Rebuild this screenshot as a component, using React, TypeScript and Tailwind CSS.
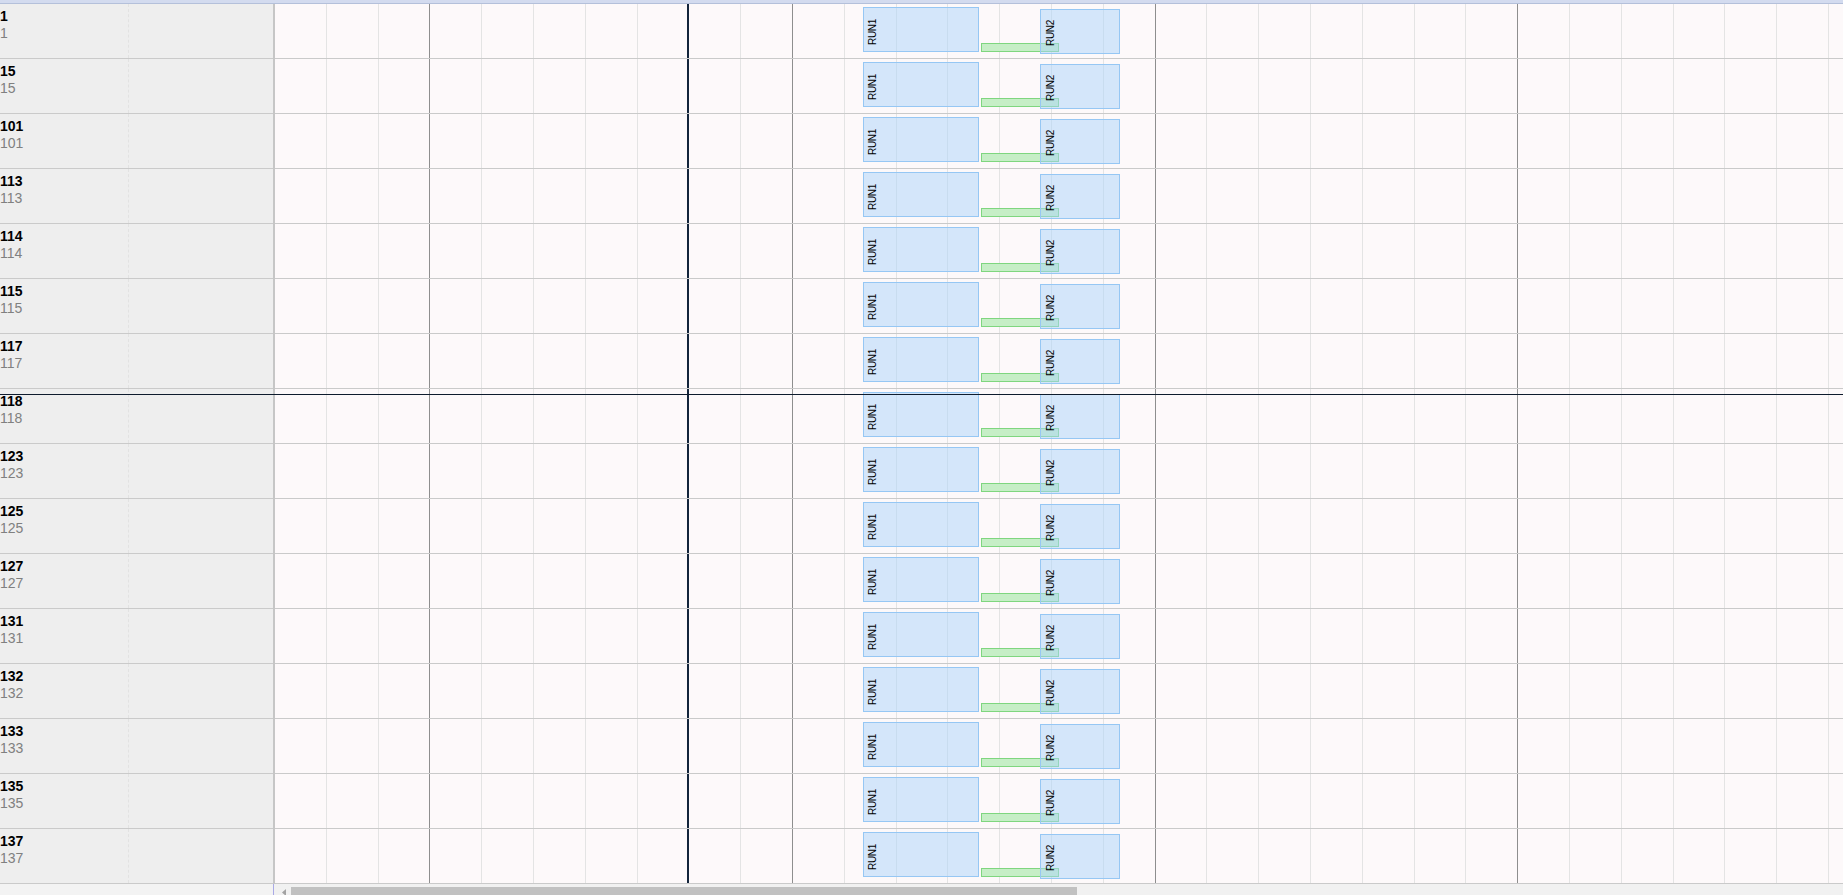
const rows = ['1', '15', '101', '113', '114', '115', '117', '118', '123', '125', '127', '131', '132', '133', '135', '137'];

const days = Array.from({ length: 31 }, (_, i) => i + 1);

function dayLine(k: number) {
  if (k === 8) return 'border-r-2 border-[#13243b]';
  if (k % 7 === 3) return 'border-r border-[#8e8e8e]';
  return 'border-r border-[#e4e4e4]';
}

function Bar({ label, className, textPos }: { label: string; className: string; textPos: string }) {
  return (
    <div className={`absolute border border-[#96c7f4] bg-[rgba(171,211,250,0.5)] ${className}`}>
      <span
        className={`absolute ${textPos} text-[10px] leading-none tracking-[-0.3px] text-black [writing-mode:vertical-rl] rotate-180`}
      >
        {label}
      </span>
    </div>
  );
}

function TimelineRow() {
  return (
    <div className="relative h-[55px] border-b border-[#cacaca]">
      <Bar label="RUN1" className="left-[588px] top-[3px] w-[116px] h-[45px]" textPos="left-[4px] bottom-[6px]" />
      <div className="absolute left-[706px] top-[39px] w-[78px] h-[9px] border border-[#7fd67f] bg-[#c6eec6]" />
      <Bar label="RUN2" className="left-[765px] top-[5px] w-[80px] h-[45px]" textPos="left-[5px] bottom-[7px]" />
    </div>
  );
}

export default function App() {
  return (
    <div className="relative h-[895px] w-[1843px] overflow-hidden bg-white font-['Liberation_Sans',Arial,sans-serif]">
      <div className="h-[4px] bg-[#d3dbef] border-b border-[#b4c0da]" />

      <div className="flex">
        {/* resource column */}
        <div className="w-[275px] shrink-0 bg-[#eeeeee] border-r-2 border-[#c6c6c6]">
          {rows.map((r) => (
            <div key={r} className="flex h-[55px] border-b border-[#cacaca]">
              <div className="w-[129px] border-r border-dashed border-[#e2e2e2] pt-[4px]">
                <div className="text-[14px] leading-[17px] font-bold text-black">{r}</div>
                <div className="text-[14px] leading-[17px] text-[#808080]">{r}</div>
              </div>
              <div className="flex-1" />
            </div>
          ))}
        </div>

        {/* schedule */}
        <div className="relative flex-1 overflow-hidden bg-[#fdf9fa]">
          <div className="absolute inset-0 flex">
            {days.map((k) => (
              <div key={k} className={`w-[51.81px] shrink-0 h-full ${dayLine(k)}`} />
            ))}
          </div>
          {rows.map((r) => (
            <TimelineRow key={r} />
          ))}
        </div>
      </div>

      {/* horizontal scrollbar */}
      <div className="flex h-[17px]">
        <div className="w-[273px] shrink-0 bg-[#f3f3f3]" />
        <div className="flex flex-1 border-l border-[#a9a9e6] bg-[#f1f1f1]">
          <div className="w-[17px] shrink-0 pl-[8px] pt-[5px]">
            <svg width="4" height="7" viewBox="0 0 4 7">
              <path d="M4 0 L0 3.5 L4 7 Z" fill="#a3a3a3" />
            </svg>
          </div>
          <div className="mt-[3px] h-[12px] w-[786px] bg-[#c1c1c1]" />
        </div>
      </div>

      {/* drop indicator */}
      <div className="absolute left-0 right-0 top-[394px] h-px bg-[#0e1b2d]" />
    </div>
  );
}
